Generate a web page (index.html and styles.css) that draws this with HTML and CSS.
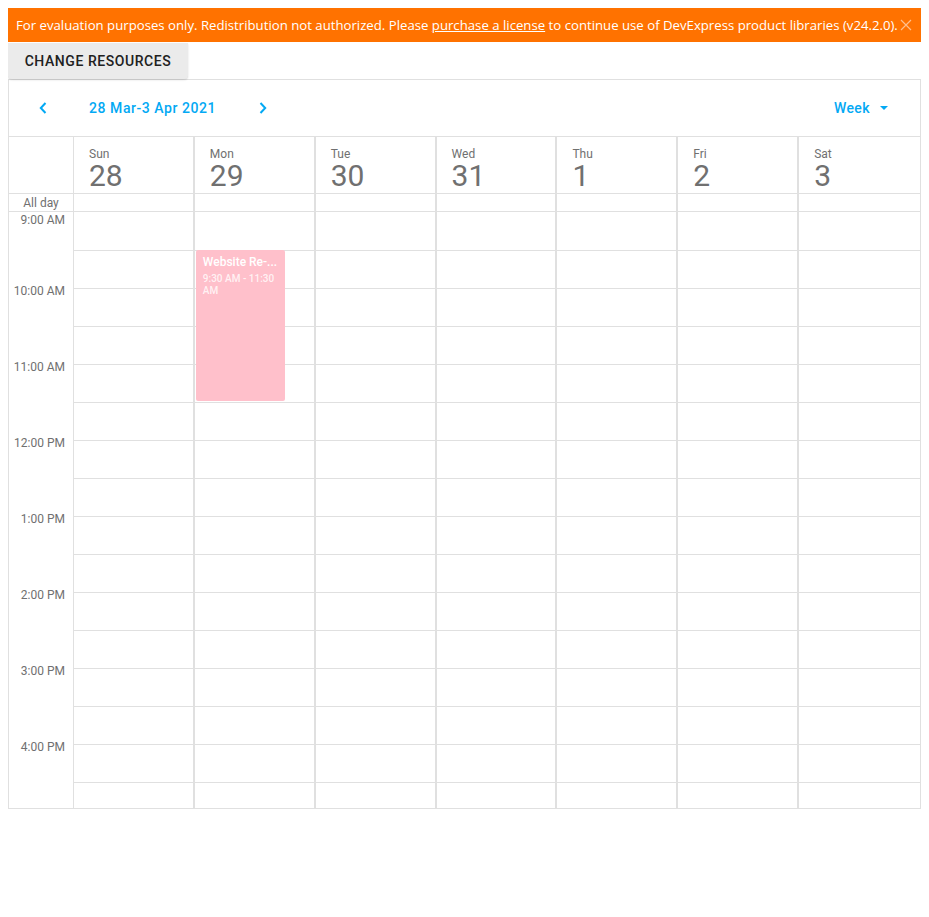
FILE: index.html
```html
<!DOCTYPE html>
<html>
<head>
<meta charset="utf-8">
<link rel="stylesheet" href="styles.css">
</head>
<body>
<div class="banner">
  <span class="banner-text">For evaluation purposes only. Redistribution not authorized. Please <a class="banner-link">purchase a license</a> to continue use of DevExpress product libraries (v24.2.0).</span>
  <svg class="banner-close" width="12" height="12" viewBox="0 0 12 12"><path d="M1 1L11 11M11 1L1 11" stroke="rgba(255,255,255,0.55)" stroke-width="1.2" fill="none"/></svg>
</div>
<button class="btn">CHANGE RESOURCES</button>
<div class="scheduler">
  <div class="toolbar">
    <div class="nav">
      <span class="nav-btn"><svg width="8" height="12" viewBox="0 0 8 12"><path d="M6.5 1L1.8 6L6.5 11" stroke="#03a9f4" stroke-width="2" fill="none"/></svg></span>
      <span class="caption">28 Mar-3 Apr 2021</span>
      <span class="nav-btn"><svg width="8" height="12" viewBox="0 0 8 12"><path d="M1.5 1L6.2 6L1.5 11" stroke="#03a9f4" stroke-width="2" fill="none"/></svg></span>
    </div>
    <div class="view">Week <svg class="caret" width="8" height="4" viewBox="0 0 8 4"><path d="M0 0H8L4 4Z" fill="#03a9f4"/></svg></div>
  </div>
  <div class="header-row">
    <div class="corner"></div>
    <div class="day-head"><div class="dname">Sun</div><div class="dnum">28</div></div>
    <div class="day-head"><div class="dname">Mon</div><div class="dnum">29</div></div>
    <div class="day-head"><div class="dname">Tue</div><div class="dnum">30</div></div>
    <div class="day-head"><div class="dname">Wed</div><div class="dnum">31</div></div>
    <div class="day-head"><div class="dname">Thu</div><div class="dnum">1</div></div>
    <div class="day-head"><div class="dname">Fri</div><div class="dnum">2</div></div>
    <div class="day-head"><div class="dname">Sat</div><div class="dnum">3</div></div>
  </div>
  <div class="allday-row">
    <div class="allday-label">All day</div>
    <div class="allday-cell"></div><div class="allday-cell"></div><div class="allday-cell"></div><div class="allday-cell"></div><div class="allday-cell"></div><div class="allday-cell"></div><div class="allday-cell"></div>
  </div>
  <div class="body">
    <div class="time-col">
      <div class="hour first"><span>9:00 AM</span></div>
      <div class="hour"><span>10:00 AM</span></div>
      <div class="hour"><span>11:00 AM</span></div>
      <div class="hour"><span>12:00 PM</span></div>
      <div class="hour"><span>1:00 PM</span></div>
      <div class="hour"><span>2:00 PM</span></div>
      <div class="hour"><span>3:00 PM</span></div>
      <div class="hour"><span>4:00 PM</span></div>
    </div>
    <div class="day-col"><div class="cell"></div><div class="cell"></div><div class="cell"></div><div class="cell"></div><div class="cell"></div><div class="cell"></div><div class="cell"></div><div class="cell"></div><div class="cell"></div><div class="cell"></div><div class="cell"></div><div class="cell"></div><div class="cell"></div><div class="cell"></div><div class="cell"></div><div class="cell"></div></div>
    <div class="day-col"><div class="cell"></div><div class="cell"></div><div class="cell"></div><div class="cell"></div><div class="cell"></div><div class="cell"></div><div class="cell"></div><div class="cell"></div><div class="cell"></div><div class="cell"></div><div class="cell"></div><div class="cell"></div><div class="cell"></div><div class="cell"></div><div class="cell"></div><div class="cell"></div>
      <div class="appt">
        <div class="appt-title">Website Re-...</div>
        <div class="appt-time">9:30 AM - 11:30 AM</div>
      </div>
    </div>
    <div class="day-col"><div class="cell"></div><div class="cell"></div><div class="cell"></div><div class="cell"></div><div class="cell"></div><div class="cell"></div><div class="cell"></div><div class="cell"></div><div class="cell"></div><div class="cell"></div><div class="cell"></div><div class="cell"></div><div class="cell"></div><div class="cell"></div><div class="cell"></div><div class="cell"></div></div>
    <div class="day-col"><div class="cell"></div><div class="cell"></div><div class="cell"></div><div class="cell"></div><div class="cell"></div><div class="cell"></div><div class="cell"></div><div class="cell"></div><div class="cell"></div><div class="cell"></div><div class="cell"></div><div class="cell"></div><div class="cell"></div><div class="cell"></div><div class="cell"></div><div class="cell"></div></div>
    <div class="day-col"><div class="cell"></div><div class="cell"></div><div class="cell"></div><div class="cell"></div><div class="cell"></div><div class="cell"></div><div class="cell"></div><div class="cell"></div><div class="cell"></div><div class="cell"></div><div class="cell"></div><div class="cell"></div><div class="cell"></div><div class="cell"></div><div class="cell"></div><div class="cell"></div></div>
    <div class="day-col"><div class="cell"></div><div class="cell"></div><div class="cell"></div><div class="cell"></div><div class="cell"></div><div class="cell"></div><div class="cell"></div><div class="cell"></div><div class="cell"></div><div class="cell"></div><div class="cell"></div><div class="cell"></div><div class="cell"></div><div class="cell"></div><div class="cell"></div><div class="cell"></div></div>
    <div class="day-col"><div class="cell"></div><div class="cell"></div><div class="cell"></div><div class="cell"></div><div class="cell"></div><div class="cell"></div><div class="cell"></div><div class="cell"></div><div class="cell"></div><div class="cell"></div><div class="cell"></div><div class="cell"></div><div class="cell"></div><div class="cell"></div><div class="cell"></div><div class="cell"></div></div>
  </div>
</div>
</body>
</html>
```
FILE: styles.css
```css
html, body {
  margin: 0;
  padding: 0;
  background: #fff;
}
body {
  margin: 8px;
  font-family: Roboto, "Liberation Sans", sans-serif;
  color: #333;
}
.banner {
  height: 34px;
  background: #ff7200;
  color: #fff;
  display: flex;
  align-items: center;
  padding-left: 8px;
  box-sizing: border-box;
  font-family: "Open Sans", "Noto Sans", sans-serif;
  font-size: 13.2px;
}
.banner-text {
  white-space: nowrap;
}
.banner-link {
  color: #fff;
  text-decoration: underline;
}
.banner-close {
  margin-left: 2px;
}
.btn {
  display: block;
  margin: 1px 0 0 0;
  height: 36px;
  width: 180px;
  border: none;
  border-radius: 0 0 4px 4px;
  background: #ebebeb;
  box-shadow: 0 1px 2px rgba(0,0,0,0.15);
  font-family: Roboto, sans-serif;
  font-size: 14px;
  font-weight: 500;
  letter-spacing: 0.04em;
  color: #212121;
  padding: 0;
  text-align: center;
  position: relative;
  z-index: 1;
}
.scheduler {
  border: 1px solid #e0e0e0;
}
.toolbar {
  height: 56px;
  border-bottom: 1px solid #e0e0e0;
  display: flex;
  align-items: center;
  justify-content: space-between;
}
.nav {
  display: flex;
  align-items: center;
  margin-left: 30px;
}
.nav-btn {
  width: 8px;
  height: 12px;
  display: flex;
}
.caption {
  font-size: 14px;
  font-weight: 500;
  color: #03a9f4;
  letter-spacing: 0.04em;
  margin: 0 43px 0 42px;
}
.view {
  font-size: 14px;
  font-weight: 500;
  color: #03a9f4;
  letter-spacing: 0.03em;
  margin-right: 32px;
  display: flex;
  align-items: center;
}
.caret {
  margin-left: 10px;
}
.header-row, .allday-row, .body {
  display: grid;
  grid-template-columns: 65px repeat(7, 1fr);
}
.header-row {
  height: 56px;
  border-bottom: 1px solid #e0e0e0;
}
.corner {
  border-right: 1px solid #e0e0e0;
}
.day-head {
  border-right: 2px solid #e0e0e0;
  padding: 11px 0 0 15px;
  color: #707070;
}
.day-head:last-child, .allday-cell:last-child, .day-col:last-child {
  border-right: none;
}
.dname {
  font-size: 12px;
  line-height: 12px;
}
.dnum {
  font-size: 30px;
  line-height: 32px;
}
.allday-row {
  height: 17px;
  border-bottom: 1px solid #e0e0e0;
}
.allday-label {
  border-right: 1px solid #e0e0e0;
  font-size: 12px;
  color: #707070;
  text-align: center;
  line-height: 17px;
  padding-top: 1px;
  box-sizing: border-box;
}
.allday-cell {
  border-right: 2px solid #e0e0e0;
}
.body {
  height: 596px;
  overflow: hidden;
}
.time-col {
  border-right: 1px solid #e0e0e0;
  display: flex;
  flex-direction: column;
}
.hour {
  height: 76px;
  flex: none;
  text-align: right;
  padding-right: 8px;
  font-size: 12px;
  line-height: 14px;
  color: #707070;
}
.hour span {
  display: block;
  margin-top: -4px;
}
.hour.first span {
  margin-top: 1px;
}
.day-col {
  border-right: 2px solid #e0e0e0;
  display: flex;
  flex-direction: column;
  position: relative;
}
.cell {
  height: 37px;
  flex: none;
  border-bottom: 1px solid #e0e0e0;
}
.cell:first-child {
  height: 38px;
}
.appt {
  position: absolute;
  top: 38px;
  left: 1px;
  width: 89px;
  height: 151px;
  background: #ffc0cb;
  border-radius: 2px;
  padding: 5px 7px;
  box-sizing: border-box;
  color: #fff;
}
.appt-title {
  font-size: 12px;
  font-weight: 500;
  line-height: 14px;
  white-space: nowrap;
}
.appt-time {
  font-size: 10px;
  font-weight: 500;
  line-height: 12px;
  margin-top: 4px;
  color: rgba(255,255,255,0.8);
}
```
